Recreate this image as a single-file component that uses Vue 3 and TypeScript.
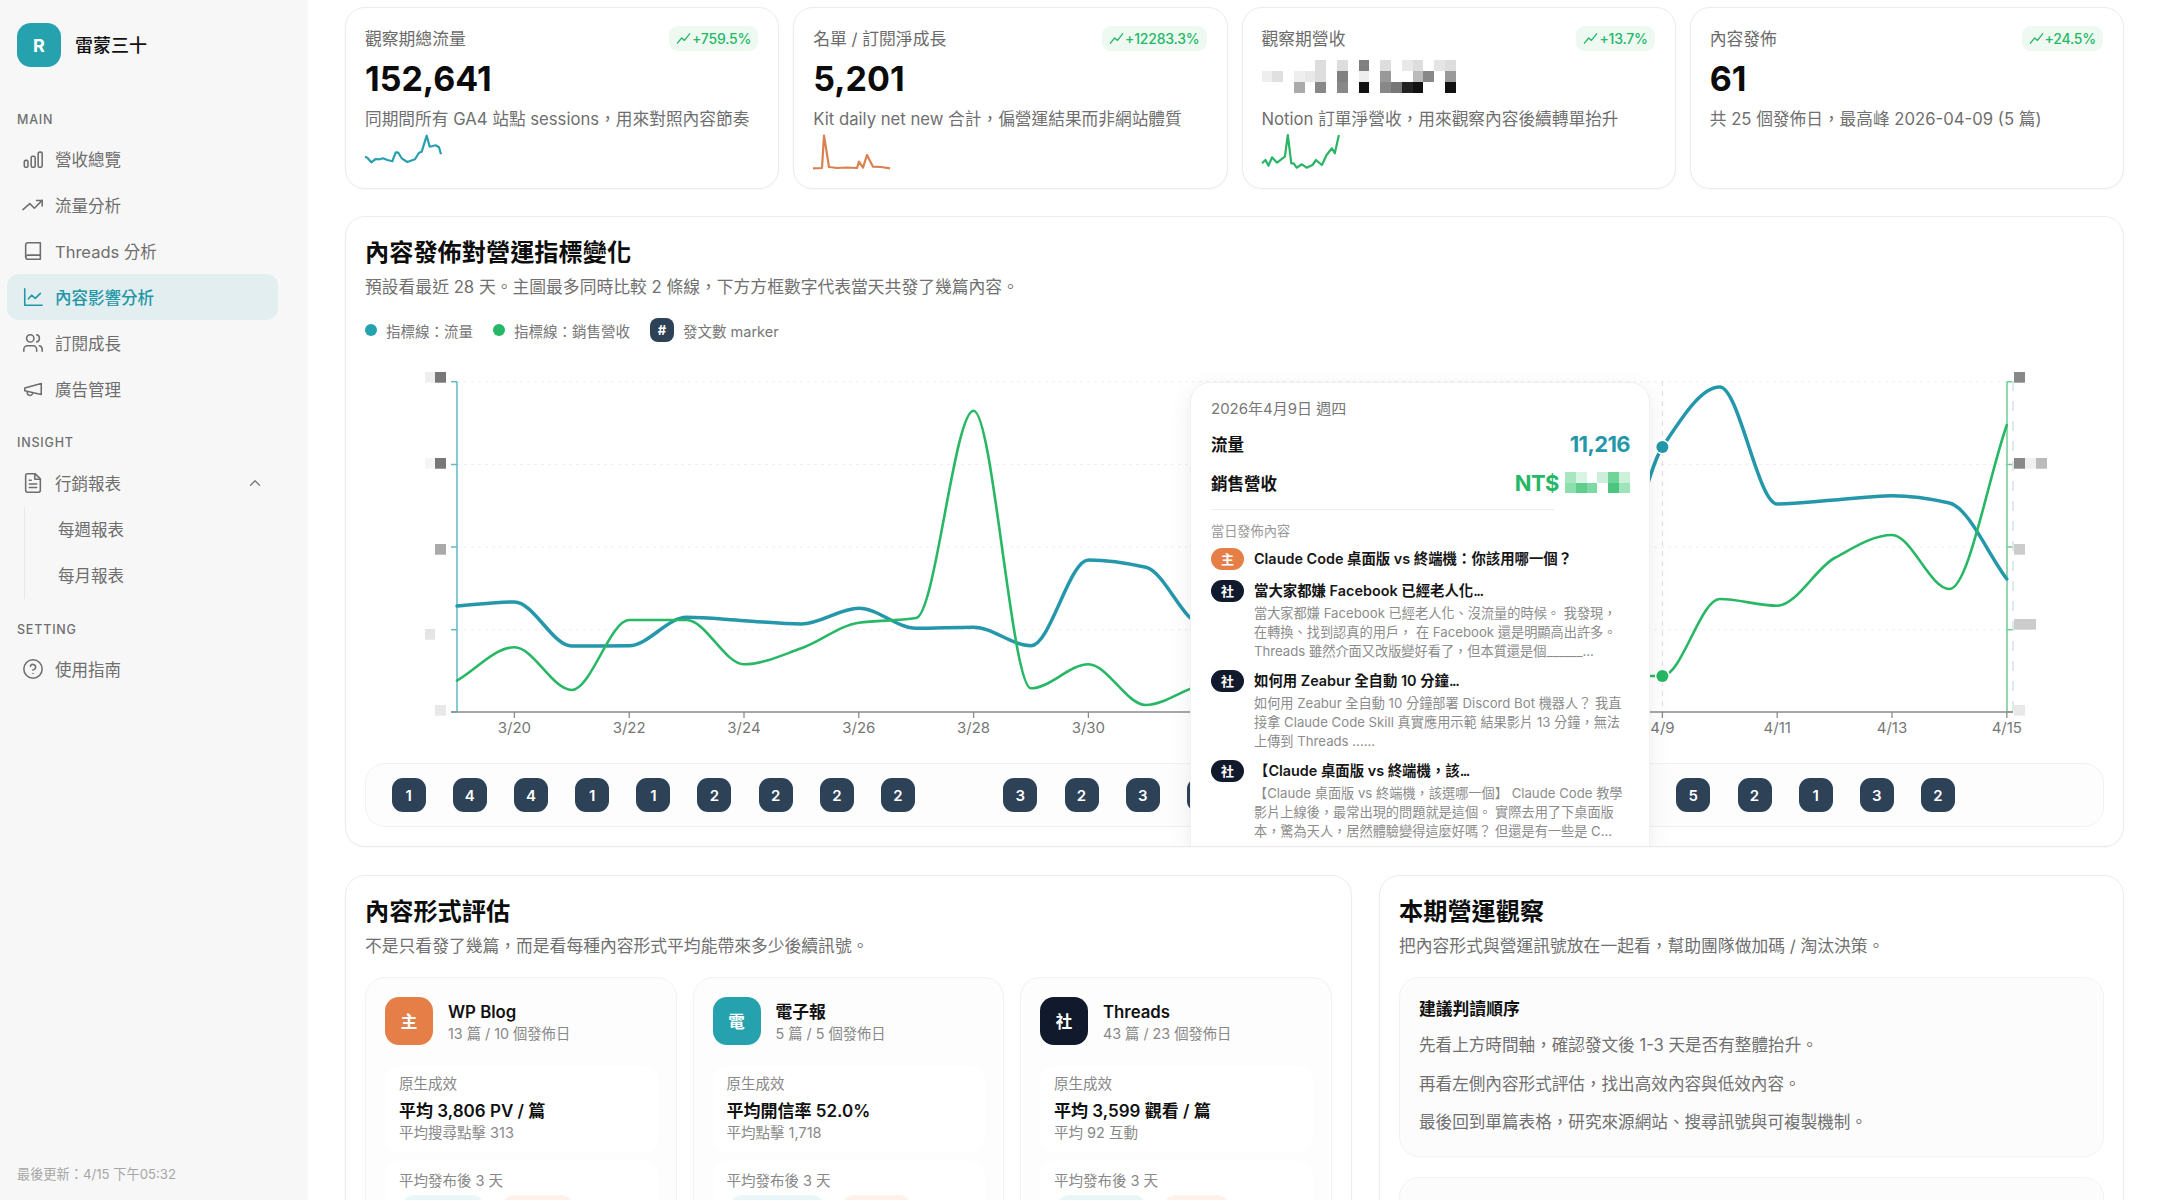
<script setup lang="ts">
type Pt = [number, number]

const navMain = [
  { key: 'bars', label: '營收總覽' },
  { key: 'trend', label: '流量分析' },
  { key: 'book', label: 'Threads 分析' },
  { key: 'line', label: '內容影響分析', active: true },
  { key: 'users', label: '訂閱成長' },
  { key: 'mega', label: '廣告管理' }
]

function poly(points: Pt[]): string {
  return points.map((p, i) => (i ? 'L' : 'M') + p[0] + ' ' + p[1]).join(' ')
}

const mosaicValue: string[][] = [
  ['', '', '', '', '', '#ddd', '', '#ddd', '', '#808080', '', '#ddd', '', '#e8e8e8', '#ddd', '', '#e5e5e5', '#ddd'],
  ['#eee', '#e0e0e0', '', '#eee', '#e8e8e8', '#ddd', '', '#808080', '', '#eee', '', '#999', '', '', '#bbb', '#888', '', '#999'],
  ['', '', '', '#aaa', '', '#888', '', '#888', '', '#111', '', '#888', '#777', '#222', '#111', '', '', '#111']
]
const mosaicMoney: string[][] = [
  ['#a8e6c0', '#d8f4e2', '', '#cdeedb', '#6fd498', '#cdf0da'],
  ['#8be0ae', '#5fce8c', '#7fd9a4', '', '#4cc67e', '#9ee4bb']
]

const kpis = [
  { label: '觀察期總流量', delta: '+759.5%', value: '152,641', desc: '同期間所有 GA4 站點 sessions，用來對照內容節奏', color: '#2a9fae', spark: poly([[0, 21.7], [2.3, 22.7], [6.3, 27.3], [10.7, 24], [14.7, 24.3], [18, 23.3], [22.3, 25], [27.3, 26.3], [30.7, 17.3], [33.3, 17.7], [36.7, 23.3], [42.3, 27], [50, 24.3], [54, 17.7], [56.7, 16.7], [61.7, 0.7], [64.7, 11.7], [70.7, 10.3], [74, 12.3], [76, 19.3]]) },
  { label: '名單 / 訂閱淨成長', delta: '+12283.3%', value: '5,201', desc: 'Kit daily net new 合計，偏營運結果而非網站體質', color: '#d9814f', spark: poly([[0, 33.3], [9, 33], [11, 0.5], [16, 32], [24, 33], [34, 32.5], [44, 33], [46, 26.7], [50, 32.7], [54, 20], [60, 31.7], [68, 32], [77, 33.3]]) },
  { label: '觀察期營收', delta: '+13.7%', value: '', desc: 'Notion 訂單淨營收，用來觀察內容後續轉單抬升', color: '#2ab565', spark: poly([[0, 28.3], [3.5, 25], [6.5, 30.7], [10, 22.3], [15, 27.7], [22.9, 21.7], [25.8, 0], [29.3, 28.3], [31.7, 28.3], [34.6, 32.7], [39.9, 29.3], [44.6, 32.7], [50.5, 30], [54, 25], [59.9, 30], [64.6, 20], [69.9, 13.3], [72.8, 18.3], [76.9, 0]]) },
  { label: '內容發佈', delta: '+24.5%', value: '61', desc: '共 25 個發佈日，最高峰 2026-04-09 (5 篇)', color: '', spark: '' }
]

const X0 = 457
const DX = 57.4
const dayX = (i: number) => X0 + i * DX

const tealY = [606, 602, 646, 645.7, 617.3, 620.7, 624, 608.3, 628.3, 627.3, 645.7, 560, 567.3, 625, 600, 560, 520, 500, 520, 560, 600, 447, 387, 504, 500, 495.7, 503, 579]
const greenY = [680.7, 647.3, 690, 620, 620, 664.3, 648.3, 622.7, 618, 410.7, 688.3, 664.3, 705, 685, 680, 670, 660, 650, 660, 670, 676, 676, 599, 605.7, 558, 535, 589, 425]

function smooth(ys: number[]): string {
  const n = ys.length
  const s: number[] = []
  for (let i = 0; i < n - 1; i++) s.push((ys[i + 1] - ys[i]) / DX)
  const m: number[] = [s[0]]
  for (let i = 1; i < n - 1; i++) {
    if (s[i - 1] * s[i] <= 0) m.push(0)
    else m.push((2 * s[i - 1] * s[i]) / (s[i - 1] + s[i]))
  }
  m.push(s[n - 2])
  let d = `M${dayX(0)} ${ys[0]}`
  const h = DX / 3
  for (let i = 0; i < n - 1; i++) {
    d += ` C${(dayX(i) + h).toFixed(1)} ${(ys[i] + m[i] * h).toFixed(1)} ${(dayX(i + 1) - h).toFixed(1)} ${(ys[i + 1] - m[i + 1] * h).toFixed(1)} ${dayX(i + 1).toFixed(1)} ${ys[i + 1]}`
  }
  return d
}
const tealPath = smooth(tealY)
const greenPath = smooth(greenY)

const gridYs = [381.7, 464.5, 547, 629.7]
const xTicks = ['3/20', '3/22', '3/24', '3/26', '3/28', '3/30', '4/1', '4/3', '4/5', '4/7', '4/9', '4/11', '4/13', '4/15'].map((t, i) => ({ t, x: dayX(1 + i * 2) }))
// Labels that sit fully under the open tooltip are not painted.
const xLabels = xTicks.filter((l) => l.x < 1180 || l.x > 1655)

const axisBlocks = [
  { x: 425, y: 372, w: 10, h: 10.7, f: '#eeeeee' },
  { x: 435, y: 372, w: 11, h: 10.7, f: '#777777' },
  { x: 425, y: 458, w: 10, h: 10.7, f: '#f5f5f5' },
  { x: 435, y: 458, w: 11, h: 10.7, f: '#777777' },
  { x: 435, y: 544, w: 11, h: 10.7, f: '#aaaaaa' },
  { x: 425, y: 629, w: 10, h: 10.7, f: '#e5e5e5' },
  { x: 435, y: 705, w: 11, h: 10.7, f: '#e8e8e8' },
  { x: 2014, y: 372, w: 11, h: 10.7, f: '#888888' },
  { x: 2014, y: 458, w: 11, h: 10.7, f: '#888888' },
  { x: 2025, y: 458, w: 11, h: 10.7, f: '#f0f0f0' },
  { x: 2036, y: 458, w: 11, h: 10.7, f: '#bbbbbb' },
  { x: 2014, y: 544, w: 11, h: 10.7, f: '#cccccc' },
  { x: 2014, y: 619, w: 22, h: 10.7, f: '#cccccc' },
  { x: 2014, y: 705, w: 11, h: 10.7, f: '#e8e8e8' }
]

// 28 daily slots; slot 13 is almost fully under the tooltip (label-less sliver),
// slots 14-20 lie entirely beneath it.
const posts: (number | string)[] = [1, 4, 4, 1, 1, 2, 2, 2, 2, 0, 3, 2, 3, '', 0, 0, 0, 0, 0, 0, 0, 5, 2, 1, 3, 2, 0, 0]

const tipItems = [
  { tag: '主', kind: 'own', title: 'Claude Code 桌面版 vs 終端機：你該用哪一個？', cut: false, lines: [] as string[] },
  { tag: '社', kind: 'social', title: '當大家都嫌 Facebook 已經老人化', cut: true, lines: ['當大家都嫌 Facebook 已經老人化、沒流量的時候。 我發現，', '在轉換、找到認真的用戶， 在 Facebook 還是明顯高出許多。', 'Threads 雖然介面又改版變好看了，但本質還是個______...'] },
  { tag: '社', kind: 'social', title: '如何用 Zeabur 全自動 10 分鐘', cut: true, lines: ['如何用 Zeabur 全自動 10 分鐘部署 Discord Bot 機器人？ 我直', '接拿 Claude Code Skill 真實應用示範 結果影片 13 分鐘，無法', '上傳到 Threads ......'] },
  { tag: '社', kind: 'social', title: '【Claude 桌面版 vs 終端機，該', cut: true, lines: ['【Claude 桌面版 vs 終端機，該選哪一個】 Claude Code 教學', '影片上線後，最常出現的問題就是這個。 實際去用了下桌面版', '本，驚為天人，居然體驗變得這麼好嗎？ 但還是有一些是 C...'] }
]

const formats = [
  { icon: '主', bg: '#e67f47', name: 'WP Blog', meta: '13 篇 / 10 個發佈日', value: '平均 3,806 PV / 篇', sub: '平均搜尋點擊 313', w1: 82, w2: 71 },
  { icon: '電', bg: '#25a2ae', name: '電子報', meta: '5 篇 / 5 個發佈日', value: '平均開信率 52.0%', sub: '平均點擊 1,718', w1: 94, w2: 69 },
  { icon: '社', bg: '#101a2c', name: 'Threads', meta: '43 篇 / 23 個發佈日', value: '平均 3,599 觀看 / 篇', sub: '平均 92 互動', w1: 89, w2: 65 }
]

const readingTips = ['先看上方時間軸，確認發文後 1-3 天是否有整體抬升。', '再看左側內容形式評估，找出高效內容與低效內容。', '最後回到單篇表格，研究來源網站、搜尋訊號與可複製機制。']
</script>

<template>
  <div class="shell">
    <aside class="sidebar">
      <div class="brand">
        <div class="logo">R</div>
        <div class="brand-name">雷蒙三十</div>
      </div>

      <div class="section first">MAIN</div>
      <nav>
        <a v-for="item in navMain" :key="item.key" class="nav-item" :class="{ active: item.active }">
          <svg class="ico" viewBox="0 0 24 24">
            <template v-if="item.key === 'bars'">
              <rect x="2.5" y="13.5" width="4" height="7.5" rx="1.5" />
              <rect x="10" y="9" width="4.4" height="12" rx="1.6" />
              <rect x="17.6" y="4.5" width="4.4" height="16.5" rx="1.6" />
            </template>
            <template v-else-if="item.key === 'trend'">
              <polyline points="22 7 13.5 15.5 8.5 10.5 1 17" />
              <polyline points="16 7 22 7 22 13" />
            </template>
            <template v-else-if="item.key === 'book'">
              <path d="M4 5.5A2.5 2.5 0 0 1 6.500 3H20v18H6.500A2.500 2.500 0 0 1 4 18.500z" />
              <path d="M4 18.500A2.500 2.500 0 0 1 6.500 16.500H20" />
            </template>
            <template v-else-if="item.key === 'line'">
              <path d="M3 3v18h19" />
              <path d="m20 8-5.500 5.500-4-3.500-3.500 4" />
            </template>
            <template v-else-if="item.key === 'users'">
              <path d="M16 21v-2a4 4 0 0 0-4-4H6a4 4 0 0 0-4 4v2" />
              <circle cx="9" cy="7" r="4" />
              <path d="M22 21v-2a4 4 0 0 0-3-3.870" />
              <path d="M16 3.130a4 4 0 0 1 0 7.750" />
            </template>
            <template v-else>
              <path d="m3 11 18-5v12L3 14v-3z" />
              <path d="M11.600 16.800a3 3 0 1 1-5.800-1.600" />
            </template>
          </svg>
          <span>{{ item.label }}</span>
        </a>
      </nav>

      <div class="section">INSIGHT</div>
      <a class="nav-item">
        <svg class="ico" viewBox="0 0 24 24">
          <path d="M14.500 2H6a2 2 0 0 0-2 2v16a2 2 0 0 0 2 2h12a2 2 0 0 0 2-2V7.500L14.500 2z" />
          <path d="M14 2v6h6" />
          <path d="M16 13H8" />
          <path d="M16 17H8" />
          <path d="M10 9H8" />
        </svg>
        <span>行銷報表</span>
        <svg class="chev" viewBox="0 0 24 24"><path d="m18 15-6-6-6 6" /></svg>
      </a>
      <div class="subnav">
        <a class="sub-item">每週報表</a>
        <a class="sub-item">每月報表</a>
      </div>

      <div class="section setting">SETTING</div>
      <a class="nav-item">
        <svg class="ico" viewBox="0 0 24 24">
          <circle cx="12" cy="12" r="10" />
          <path d="M9.090 9a3 3 0 0 1 5.830 1c0 2-3 3-3 3" />
          <path d="M12 17h.010" />
        </svg>
        <span>使用指南</span>
      </a>

      <div class="updated">最後更新：4/15 下午05:32</div>
    </aside>

    <main class="content">
      <section class="kpis">
        <article v-for="k in kpis" :key="k.label" class="card kpi">
          <header class="kpi-head">
            <span class="kpi-label">{{ k.label }}</span>
            <span class="delta">
              <svg viewBox="0 0 16 16"><polyline points="1.500 13 6 7.500 9 10 14.500 3" /></svg>
              {{ k.delta }}
            </span>
          </header>
          <div v-if="k.value" class="kpi-value">{{ k.value }}</div>
          <div v-else class="kpi-mosaic">
            <div v-for="(row, r) in mosaicValue" :key="r" class="mosaic-row">
              <i v-for="(c, i) in row" :key="i" :style="{ background: c || 'transparent' }"></i>
            </div>
          </div>
          <p class="kpi-desc">{{ k.desc }}</p>
          <svg v-if="k.spark" class="spark" viewBox="0 0 78 36">
            <path :d="k.spark" :stroke="k.color" />
          </svg>
        </article>
      </section>

      <section class="card chart-card">
        <h2 class="title">內容發佈對營運指標變化</h2>
        <p class="subtitle">預設看最近 28 天。主圖最多同時比較 2 條線，下方方框數字代表當天共發了幾篇內容。</p>
        <div class="legend">
          <span class="dot teal"></span><span class="legend-text">指標線：流量</span>
          <span class="dot green"></span><span class="legend-text">指標線：銷售營收</span>
          <span class="hash">#</span><span class="legend-text">發文數 marker</span>
        </div>

        <svg class="chart" viewBox="365 343 1739 420">
          <g class="grid">
            <line v-for="y in gridYs" :key="y" x1="457" x2="2007" :y1="y" :y2="y" />
          </g>
          <rect v-for="(b, i) in axisBlocks" :key="i" :x="b.x" :y="b.y" :width="b.w" :height="b.h" :fill="b.f" />
          <g class="teal-axis">
            <line x1="457" x2="457" y1="381.700" y2="712" />
            <line v-for="y in [...gridYs, 712]" :key="y" x1="451" x2="457" :y1="y" :y2="y" />
          </g>
          <g class="green-axis">
            <line x1="2007" x2="2007" y1="381.700" y2="712" />
            <line v-for="y in [...gridYs, 712]" :key="y" x1="2007" x2="2013" :y1="y" :y2="y" />
          </g>
          <line class="cross-right" x1="2013" x2="2013" y1="381" y2="722" />
          <line class="cross" :x1="dayX(21)" :x2="dayX(21)" y1="381" y2="712" />
          <line class="x-axis" x1="451" x2="2013" y1="712" y2="712" />
          <line v-for="l in xTicks" :key="l.t" class="x-tick" :x1="l.x" :x2="l.x" y1="712" y2="718" />
          <text v-for="l in xLabels" :key="l.t" class="x-label" :x="l.x" y="733" text-anchor="middle">{{ l.t }}</text>
          <path class="line-teal" :d="tealPath" />
          <path class="line-green" :d="greenPath" />
          <circle class="pt-teal" :cx="dayX(21)" cy="447" r="6" />
          <circle class="pt-green" :cx="dayX(21)" cy="676" r="6" />
        </svg>

        <div class="markers">
          <div v-for="(n, i) in posts" :key="i" class="slot">
            <span v-if="n !== 0" class="marker">{{ n }}</span>
          </div>
        </div>

        <div class="tooltip">
          <div class="tip-date">2026年4月9日 週四</div>
          <div class="tip-row first">
            <span>流量</span>
            <strong class="tip-teal">11,216</strong>
          </div>
          <div class="tip-row">
            <span>銷售營收</span>
            <strong class="tip-green">NT$
              <span class="tip-mosaic">
                <span v-for="(row, r) in mosaicMoney" :key="r" class="mosaic-row">
                  <i v-for="(c, i) in row" :key="i" :style="{ background: c || 'transparent' }"></i>
                </span>
              </span>
            </strong>
          </div>
          <div class="tip-divider"></div>
          <div class="tip-sec">當日發佈內容</div>
          <div class="tip-list">
            <div v-for="(it, i) in tipItems" :key="i" class="tip-item">
              <span class="pill" :class="it.kind">{{ it.tag }}</span>
              <div class="tip-body">
                <div class="tip-title">{{ it.title }}<span v-if="it.cut" class="ell">...</span></div>
                <div v-if="it.lines.length" class="tip-lines">
                  <div v-for="(l, j) in it.lines" :key="j" class="tip-line">{{ l }}</div>
                </div>
              </div>
            </div>
          </div>
        </div>
      </section>

      <section class="bottom">
        <div class="card panel">
          <h2 class="title">內容形式評估</h2>
          <p class="subtitle">不是只看發了幾篇，而是看每種內容形式平均能帶來多少後續訊號。</p>
          <div class="formats">
            <article v-for="f in formats" :key="f.name" class="format">
              <div class="format-head">
                <div class="format-icon" :style="{ background: f.bg }">{{ f.icon }}</div>
                <div class="format-text">
                  <div class="format-name">{{ f.name }}</div>
                  <div class="format-meta">{{ f.meta }}</div>
                </div>
              </div>
              <div class="format-block">
                <div class="fb-label">原生成效</div>
                <div class="fb-value">{{ f.value }}</div>
                <div class="fb-label">{{ f.sub }}</div>
              </div>
              <div class="format-block second">
                <div class="fb-label">平均發布後 3 天</div>
                <div class="fb-pills">
                  <span class="fb-pill p-teal" :style="{ width: f.w1 + 'px' }"></span>
                  <span class="fb-pill p-orange" :style="{ width: f.w2 + 'px' }"></span>
                </div>
              </div>
            </article>
          </div>
        </div>

        <div class="card panel">
          <h2 class="title">本期營運觀察</h2>
          <p class="subtitle">把內容形式與營運訊號放在一起看，幫助團隊做加碼 / 淘汰決策。</p>
          <div class="note">
            <h3 class="note-title">建議判讀順序</h3>
            <p v-for="t in readingTips" :key="t" class="note-line">{{ t }}</p>
          </div>
          <div class="note next"></div>
        </div>
      </section>
    </main>
  </div>
</template>

<style>
html,
body {
  margin: 0;
  background: #ffffff;
  overflow: hidden;
}
</style>

<style scoped>
* {
  box-sizing: border-box;
}
.shell {
  display: flex;
  height: 1200px;
  overflow: hidden;
  font-family: Inter, "Noto Sans CJK TC", sans-serif;
  color: #111;
  background: #fff;
}
.sidebar {
  width: 308px;
  flex: none;
  height: 1200px;
  background: #f7f7f7;
  padding: 23px 30px 17px 7px;
  display: flex;
  flex-direction: column;
}
.brand {
  display: flex;
  align-items: center;
  gap: 14px;
  padding-left: 10px;
}
.logo {
  width: 44px;
  height: 44px;
  border-radius: 14px;
  background: #25a2ae;
  color: #fff;
  font-weight: 700;
  font-size: 18px;
  display: flex;
  align-items: center;
  justify-content: center;
}
.brand-name {
  font-size: 18px;
  font-weight: 500;
  color: #111;
  margin-top: -2px;
}
.section {
  font-size: 12.500px;
  line-height: 16px;
  font-weight: 500;
  letter-spacing: 0.8px;
  color: #6f6f6f;
  padding-left: 10px;
  margin-top: 23px;
  margin-bottom: 9px;
}
.section.first {
  margin-top: 45px;
  margin-bottom: 8px;
}
.section.setting {
  margin-bottom: 8px;
}
nav {
  display: flex;
  flex-direction: column;
}
.nav-item {
  height: 46px;
  display: flex;
  align-items: center;
  gap: 11px;
  padding-left: 15px;
  padding-right: 14px;
  border-radius: 12px;
  font-size: 16.500px;
  color: #6e6e6e;
}
.nav-item.active {
  background: #e3eef1;
  color: #2497a6;
  font-weight: 500;
}
.ico {
  width: 22px;
  height: 22px;
  flex: none;
  fill: none;
  stroke: currentColor;
  stroke-width: 1.700;
  stroke-linecap: round;
  stroke-linejoin: round;
}
.chev {
  width: 18px;
  height: 18px;
  margin-left: auto;
  fill: none;
  stroke: #777;
  stroke-width: 1.700;
  stroke-linecap: round;
  stroke-linejoin: round;
}
.subnav {
  margin-top: 1px;
  margin-left: 17px;
  border-left: 1px solid #e8e8e8;
  display: flex;
  flex-direction: column;
}
.sub-item {
  height: 46px;
  line-height: 46px;
  padding-left: 33px;
  font-size: 16.500px;
  color: #6e6e6e;
}
.updated {
  margin-top: auto;
  padding-left: 10px;
  font-size: 13.200px;
  line-height: 18px;
  color: #a6a6a6;
}
.content {
  flex: 1;
  min-width: 0;
  height: 1200px;
  padding: 7px 36px 0 37px;
  overflow: hidden;
}
.card {
  background: #fff;
  border: 1px solid #ececec;
  border-radius: 20px;
  box-shadow: 0 1px 2px rgba(0, 0, 0, 0.03);
}
.kpis {
  display: grid;
  grid-template-columns: repeat(4, 1fr);
  gap: 14px;
}
.kpi {
  padding: 18px 20px 17px 19px;
}
.kpi-head {
  display: flex;
  align-items: center;
  justify-content: space-between;
  height: 25px;
}
.kpi-label {
  font-size: 16.800px;
  color: #6b6b6b;
  margin-top: -2px;
}
.delta {
  display: inline-flex;
  align-items: center;
  gap: 1px;
  height: 25px;
  padding: 0 7px;
  border-radius: 9px;
  background: #edf9f1;
  color: #25b868;
  font-size: 14px;
  font-weight: 500;
  letter-spacing: -0.2px;
}
.delta svg {
  width: 15px;
  height: 15px;
  fill: none;
  stroke: currentColor;
  stroke-width: 1.400;
  stroke-linejoin: round;
  stroke-linecap: round;
}
.kpi-value {
  margin-top: 8px;
  height: 40px;
  line-height: 40px;
  font-size: 34px;
  font-weight: 700;
  color: #0b0b0b;
}
.kpi-mosaic {
  margin-top: 8px;
  height: 40px;
  padding-top: 1px;
  display: block;
}
.mosaic-row {
  display: flex;
}
.kpi-mosaic .mosaic-row i {
  display: block;
  width: 10.800px;
  height: 10.900px;
}
.kpi-desc {
  margin: 8px 0 0;
  font-size: 16.700px;
  line-height: 24px;
  color: #6f6f6f;
  white-space: nowrap;
}
.spark {
  display: block;
  margin-top: 4px;
  width: 78px;
  height: 36px;
  overflow: visible;
}
.spark path {
  fill: none;
  stroke-width: 2.200;
  stroke-linejoin: round;
}
.chart-card {
  position: relative;
  overflow: hidden;
  margin-top: 27px;
  padding: 20px 19px 19px 19px;
}
.title {
  margin: 0;
  font-size: 24.200px;
  line-height: 32px;
  font-weight: 700;
  color: #0d0d0d;
}
.subtitle {
  margin: 6px 0 0;
  font-size: 16.800px;
  line-height: 24px;
  color: #707070;
  white-space: nowrap;
}
.legend {
  margin-top: 19px;
  margin-bottom: 1px;
  height: 24px;
  display: flex;
  align-items: center;
  font-size: 14.500px;
  color: #777;
}
.dot {
  width: 12px;
  height: 12px;
  border-radius: 50%;
}
.dot.teal {
  background: #25a2ae;
}
.dot.green {
  background: #25b868;
}
.legend-text {
  margin-left: 9px;
  margin-right: 20px;
}
.hash {
  width: 24px;
  height: 24px;
  border-radius: 8px;
  background: #2d4157;
  color: #fff;
  font-size: 13px;
  font-weight: 700;
  display: flex;
  align-items: center;
  justify-content: center;
}
.chart {
  display: block;
  width: 1739px;
  height: 420px;
}
.grid line {
  stroke: #eeeeee;
  stroke-width: 1;
  stroke-dasharray: 3 4;
}
.teal-axis line {
  stroke: #5fb9c4;
  stroke-width: 1.500;
}
.green-axis line {
  stroke: #6fcb94;
  stroke-width: 1.500;
}
.cross {
  stroke: #dddddd;
  stroke-width: 1;
  stroke-dasharray: 5 5;
}
.cross-right {
  stroke: #cfe6dc;
  stroke-width: 1.500;
  stroke-dasharray: 10 10;
}
.x-axis,
.x-tick {
  stroke: #8a8a8a;
  stroke-width: 1.300;
}
.x-label {
  font-size: 15px;
  fill: #777;
  font-family: Inter, sans-serif;
}
.line-teal {
  fill: none;
  stroke: #2497ab;
  stroke-width: 3.500;
  stroke-linecap: round;
}
.line-green {
  fill: none;
  stroke: #27b765;
  stroke-width: 2.600;
  stroke-linecap: round;
}
.pt-teal,
.pt-green {
  stroke: #fff;
  stroke-width: 3;
  paint-order: stroke;
}
.pt-teal {
  fill: #2497ab;
}
.pt-green {
  fill: #27b765;
}
.markers {
  height: 64px;
  padding: 0 12px;
  display: grid;
  grid-template-columns: repeat(28, 1fr);
  align-items: center;
  border: 1px solid #f1f1f1;
  border-radius: 20px;
  background: #fdfdfd;
}
.slot {
  display: flex;
  justify-content: center;
  height: 34px;
}
.marker {
  width: 34px;
  height: 34px;
  border-radius: 11px;
  background: #2d4157;
  color: #fff;
  font-size: 15px;
  font-weight: 600;
  display: flex;
  align-items: center;
  justify-content: center;
}
.tooltip {
  position: absolute;
  left: 844px;
  top: 165px;
  width: 460px;
  height: 520px;
  padding: 16px 19px 0 20px;
  background: #fff;
  border: 1px solid #f0f0f0;
  border-radius: 20px;
  box-shadow: 0 6px 24px rgba(0, 0, 0, 0.07);
}
.tip-date {
  font-size: 15px;
  line-height: 20px;
  color: #777;
}
.tip-row {
  height: 30px;
  margin-top: 8.700px;
  display: flex;
  align-items: center;
  justify-content: space-between;
  font-size: 16.500px;
  font-weight: 600;
  color: #111;
}
.tip-row.first {
  margin-top: 10px;
}
.tip-teal,
.tip-green {
  font-size: 22px;
  font-weight: 700;
}
.tip-teal {
  color: #2497ab;
  letter-spacing: -0.6px;
}
.tip-green {
  color: #25b868;
  display: flex;
  align-items: center;
  gap: 6px;
  letter-spacing: -0.5px;
}
.tip-mosaic {
  display: block;
  width: 65px;
}
.tip-mosaic .mosaic-row i {
  display: block;
  width: 10.800px;
  height: 10.300px;
}
.tip-divider {
  width: 343px;
  height: 1px;
  margin-top: 11px;
  background: #ececec;
}
.tip-sec {
  margin-top: 11px;
  font-size: 13.200px;
  line-height: 20px;
  color: #999;
}
.tip-list {
  margin-top: 7px;
  display: flex;
  flex-direction: column;
  gap: 9px;
}
.tip-item {
  display: flex;
  gap: 10px;
}
.tip-item:first-child {
  margin-bottom: 1px;
}
.pill {
  flex: none;
  width: 33px;
  height: 22px;
  border-radius: 11px;
  color: #fff;
  font-size: 13px;
  font-weight: 600;
  display: flex;
  align-items: center;
  justify-content: center;
}
.pill.own {
  background: #e67f47;
}
.pill.social {
  background: #101a2c;
}
.tip-title {
  font-size: 14.400px;
  line-height: 22px;
  font-weight: 600;
  color: #161616;
  white-space: nowrap;
}
.ell {
  letter-spacing: -1.500px;
}
.tip-lines {
  margin-top: 2px;
}
.tip-line {
  font-size: 13.200px;
  line-height: 19px;
  color: #8c8c8c;
  white-space: nowrap;
}
.bottom {
  margin-top: 28px;
  display: grid;
  grid-template-columns: 1007px 1fr;
  gap: 27px;
}
.panel {
  padding: 20px 19px 0;
  height: 420px;
}
.formats {
  margin-top: 19px;
  display: grid;
  grid-template-columns: repeat(3, 311.500px);
  gap: 16px;
}
.format {
  height: 320px;
  padding: 19px 18px 19px 19px;
  border: 1px solid #f2f2f2;
  border-radius: 20px;
  background: #fdfdfd;
}
.format-head {
  display: flex;
  align-items: center;
  gap: 15px;
}
.format-text {
  padding-top: 2px;
}
.format-icon {
  width: 48px;
  height: 48px;
  border-radius: 14px;
  color: #fff;
  font-size: 16.500px;
  font-weight: 600;
  display: flex;
  align-items: center;
  justify-content: center;
}
.format-name {
  font-size: 16.800px;
  line-height: 22px;
  font-weight: 600;
  color: #111;
}
.format-meta {
  font-size: 14.300px;
  line-height: 21px;
  color: #888;
}
.format-block {
  margin-top: 21px;
  padding: 8px 14px 10px;
  height: 87px;
  border-radius: 14px;
  background: #fff;
}
.format-block.second {
  margin-top: 8px;
  padding-top: 10px;
  height: 120px;
}
.fb-label {
  font-size: 14.500px;
  line-height: 20px;
  color: #888;
}
.fb-value {
  margin-top: 4.700px;
  font-size: 17px;
  line-height: 24px;
  font-weight: 600;
  color: #111;
}
.fb-pills {
  margin-top: 4px;
  display: flex;
  gap: 18px;
  padding-left: 3px;
}
.fb-pill {
  display: block;
  height: 36px;
  border-radius: 12px;
}
.p-teal {
  background: #e9f6f7;
}
.p-orange {
  background: #fdf1ea;
}
.note {
  margin-top: 19px;
  height: 180px;
  padding: 19px 18px 0 19px;
  border: 1px solid #f2f2f2;
  border-radius: 20px;
  background: #fcfcfc;
}
.note.next {
  margin-top: 20px;
  height: 120px;
}
.note-title {
  margin: 0 0 -3px;
  font-size: 16.800px;
  line-height: 24px;
  font-weight: 600;
  color: #111;
}
.note-line {
  margin: 14.800px 0 0;
  font-size: 16.600px;
  line-height: 24px;
  color: #707070;
  white-space: nowrap;
}
</style>
